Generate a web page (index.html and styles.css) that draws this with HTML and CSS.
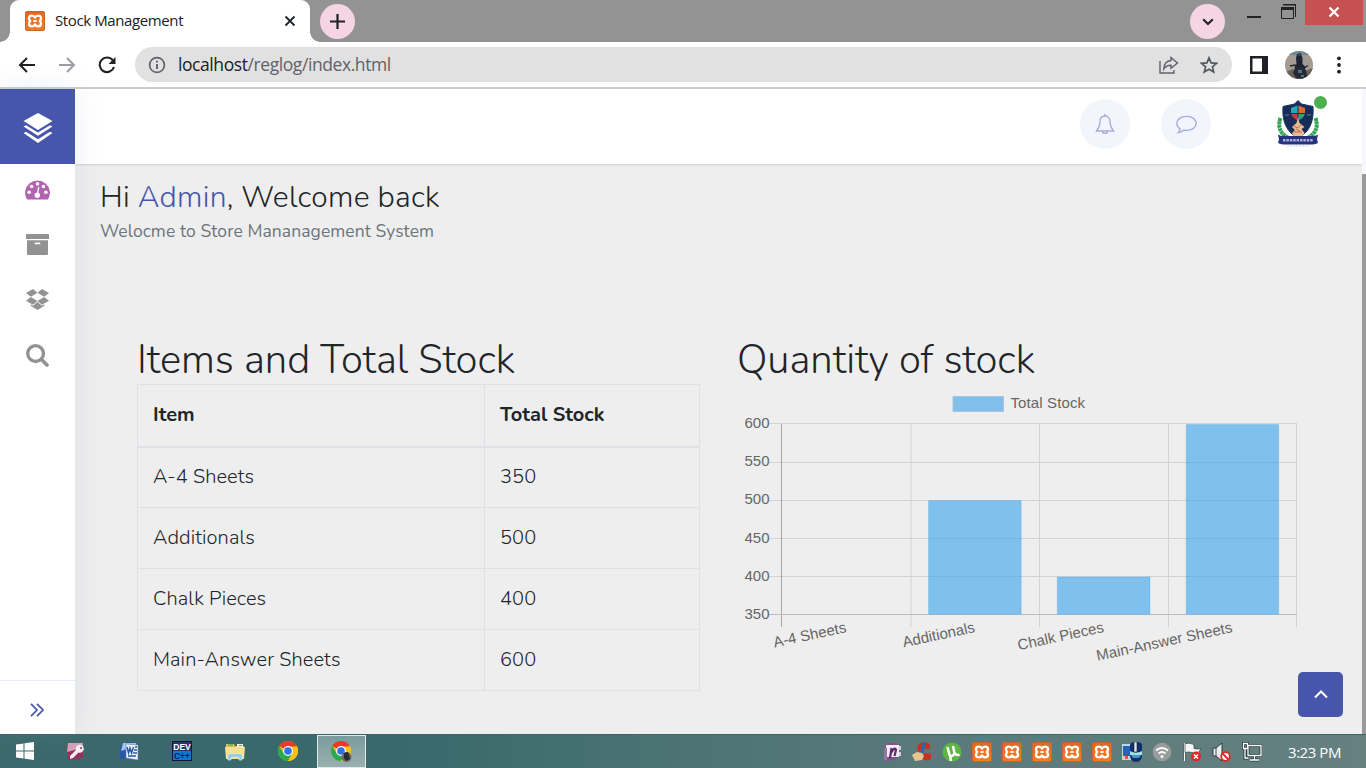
FILE: index.html
```html
<!DOCTYPE html>
<html lang="en">
<head>
<meta charset="utf-8">
<title>Stock Management</title>
<link rel="stylesheet" href="styles.css">
</head>
<body>
<svg class="defs" width="0" height="0">
  <defs>
    <linearGradient id="orange" x1="0" y1="0" x2="0" y2="1"><stop offset="0" stop-color="#d9682a"/><stop offset=".5" stop-color="#f07423"/><stop offset="1" stop-color="#f47b20"/></linearGradient>
    <symbol id="xampp" viewBox="0 0 20 20">
      <rect x=".5" y=".5" width="19" height="19" rx="1.500" fill="url(#orange)" stroke="#c9652b"/>
      <path d="M10 6.600Q9 4.700 7 4.700 4 4.700 4 7.200 4 8.500 5.200 10 4 11.500 4 12.800 4 15.300 7 15.300 9 15.300 10 13.400 11 15.300 13 15.300 16 15.300 16 12.800 16 11.500 14.800 10 16 8.500 16 7.200 16 4.700 13 4.700 11 4.700 10 6.600z" fill="none" stroke="#fff" stroke-width="2.300" stroke-linejoin="round"/>
      <path d="M8.300 10h3.400" stroke="#fff" stroke-width="1.800"/>
    </symbol>
    <symbol id="chrome" viewBox="0 0 20 20">
      <circle cx="10" cy="10" r="10" fill="#fbc116"/>
      <path d="M10 10 1.300 5A10 10 0 0 1 18.700 5z" fill="#e33b2e"/>
      <path d="M1.300 5A10 10 0 0 0 10 20l4.300-7.500L10 10 5.700 12.500z" fill="#2da94f"/>
      <path d="M10 5.500h9A10 10 0 0 1 10 20l4.300-7.500z" fill="#fbc116"/>
      <circle cx="10" cy="10" r="4.900" fill="#fff"/><circle cx="10" cy="10" r="3.800" fill="#2d72e8"/>
    </symbol>
  </defs>
</svg>
<div class="screen">
  <header class="tabstrip">
    <div class="tab">
      <svg width="20" height="20"><use href="#xampp"/></svg>
      <span class="tab-title">Stock Management</span>
      <svg class="tab-close" width="12" height="12" viewBox="0 0 12 12"><path d="M1.500 1.500l9 9M10.500 1.500l-9 9" stroke="#222529" stroke-width="1.900"/></svg>
    </div>
    <button class="round new-tab"><svg width="15" height="15" viewBox="0 0 15 15"><path d="M7.500 0v15M0 7.500h15" stroke="#202124" stroke-width="2.200"/></svg></button>
    <button class="round tab-search"><svg width="12" height="8" viewBox="0 0 12 8"><path d="M1.200 1.200 6 6l4.800-4.800" fill="none" stroke="#202124" stroke-width="2"/></svg></button>
    <div class="win-controls">
      <svg width="14" height="3"><path d="M0 1h14" stroke="#222" stroke-width="2"/></svg>
      <svg class="restore" width="16" height="16" viewBox="0 0 16 16"><path d="M2 1h12.500v12" fill="none" stroke="#222"/><path d="M2 .5h13" stroke="#222"/><path d="M.5 4v10.500h12V4" fill="none" stroke="#222"/><path d="M0 4.500h13" stroke="#222" stroke-width="3"/></svg>
      <div class="win-close"><svg width="12" height="10" viewBox="0 0 12 10"><path d="M1.500.5l9 9M10.500.5l-9 9" stroke="#fff" stroke-width="2.200"/></svg></div>
    </div>
  </header>
  <div class="toolbar">
    <svg class="nav" width="18" height="18" viewBox="0 0 18 18"><path d="M17 9H2.500M9 2 2 9l7 7" fill="none" stroke="#202124" stroke-width="2"/></svg>
    <svg class="nav" width="18" height="18" viewBox="0 0 18 18"><path d="M1 9h14.500M9 2l7 7-7 7" fill="none" stroke="#9b9da0" stroke-width="2"/></svg>
    <svg class="nav" width="18" height="18" viewBox="0 0 18 18"><path d="M14.700 4.200A7.300 7.300 0 1 0 16 11" fill="none" stroke="#202124" stroke-width="2.100"/><path d="M17.500 1v7h-7z" fill="#202124"/></svg>
    <div class="omnibox">
      <svg width="18" height="18" viewBox="0 0 18 18"><circle cx="9" cy="9" r="7.400" fill="none" stroke="#5f6368" stroke-width="1.700"/><path d="M9 8v5M9 4.700v1.900" stroke="#5f6368" stroke-width="1.900"/></svg>
      <span class="url">localhost<span class="url-path">/reglog/index.html</span></span>
      <svg class="share" width="20" height="18" viewBox="0 0 20 18"><path d="M1 5v12h14v-3" fill="none" stroke="#5f6368" stroke-width="1.400"/><path d="M12 1.500 18.500 7 12 12.200V9.200C8.500 9.200 6.500 10.300 4.800 13 5 8 7.500 4.900 12 4.500z" fill="none" stroke="#5f6368" stroke-width="1.400"/></svg>
      <svg width="18" height="18" viewBox="0 0 18 18"><path d="M9 1.900l2.100 5 5.400.4-4.100 3.500 1.300 5.300L9 13.300l-4.700 2.800 1.300-5.300L1.500 7.300l5.400-.4z" fill="none" stroke="#55595d" stroke-width="1.700"/></svg>
    </div>
    <svg class="panel-icon" width="18" height="18" viewBox="0 0 18 18"><path d="M0 0h18v18H0zM2.500 2.500v13H12v-13z" fill="#202124" fill-rule="evenodd"/></svg>
    <svg class="avatar" width="28" height="28" viewBox="0 0 28 28"><defs><clipPath id="av"><circle cx="14" cy="14" r="14"/></clipPath></defs><g clip-path="url(#av)"><path fill="#a39a90" d="M0 0h28v28H0z"/><path fill="#6c8b99" d="M0 0h28v4H0z"/><path fill="#6a6158" d="M0 21l8-3 7 4 13-5v13H0z"/><path d="M12 3h4l1.500 4v6l3 3-1 5-5 2-4-2-1-5 2-3-.5-6z" fill="#1b2436"/><circle cx="14.500" cy="3.500" r="1.800" fill="#4a403c"/><path d="M5 15l5-1 3 3h6l4-2.500" stroke="#202833" stroke-width="1.300" fill="none"/><path d="M10 17l6-1 5 3 1 6-5 3-6-1-3-5z" fill="#242b36"/><path d="M13 19h4v3h-4zM16 24h3v2h-3z" fill="#5a7184"/></g></svg>
    <svg class="dots" width="4" height="18" viewBox="0 0 4 18"><g fill="#202124"><circle cx="2" cy="2.300" r="1.900"/><circle cx="2" cy="9" r="1.900"/><circle cx="2" cy="15.700" r="1.900"/></g></svg>
  </div>

  <div class="app">
    <aside class="sidebar">
      <div class="brand"><svg width="30" height="30" viewBox="0 0 30 30" fill="#fff"><path d="M15 0 29.500 8 15 17 .5 8z"/><path d="M.5 13.500 3 12.300l12 7.200 12-7.200 2.500 1.200L15 22.800z"/><path d="M.5 20 3 18.800l12 7.400 12-7.400 2.500 1.200L15 30z"/></svg></div>
      <nav class="menu">
        <svg width="25" height="20" viewBox="0 0 25 20"><path d="M2 19.500A12.400 12.400 0 1 1 23 19.500H2z" fill="#b064b0"/><g fill="#fff"><circle cx="4.100" cy="12.300" r="1.800"/><circle cx="6.600" cy="6.500" r="1.800"/><circle cx="12.500" cy="3.900" r="1.800"/><circle cx="18.400" cy="6.500" r="1.800"/><circle cx="20.900" cy="12.300" r="1.800"/><circle cx="12.300" cy="15.300" r="2.700"/></g><path d="M12.300 15l1.400-8" stroke="#fff" stroke-width="1.400"/></svg>
        <svg width="23" height="21" viewBox="0 0 23 21" fill="#929292"><path d="M.7 0h21.600q.7 0 .7.700V5H0V.7Q0 0 .7 0z"/><path d="M1 6.200h21V20q0 1-1 1H2q-1 0-1-1zM9.500 8.500a.9.900 0 0 0 0 1.800h4a.9.900 0 0 0 0-1.800z" fill-rule="evenodd"/></svg>
        <svg width="23" height="21" viewBox="0 0 23 21" fill="#929292"><path d="M7 0l4.500 3.700L4.800 7.800 0 4zM16 0l7 4-4.800 3.800-6.700-4.100zM0 11.800l4.800-3.900 6.700 4.200L7 15.800zM18.200 7.900l4.800 3.900-7 4-4.500-3.700zM11.500 13l4.500 3.700 2.400-1.500v1.500l-6.900 4.300-6.900-4.300v-1.500L7 16.700z"/></svg>
        <svg width="23" height="23" viewBox="0 0 23 23"><circle cx="9.600" cy="9.600" r="7.900" fill="none" stroke="#929292" stroke-width="3.300"/><path d="M15.500 15.500l5.500 5.500" stroke="#929292" stroke-width="3.600" stroke-linecap="round"/></svg>
      </nav>
      <div class="expand"><svg width="14" height="14" viewBox="0 0 14 14"><path d="M1 .8 7 7l-6 6.200M7 .8 13 7l-6 6.200" fill="none" stroke="#4656ad" stroke-width="1.700"/></svg></div>
    </aside>
    <div class="page">
      <div class="topbar">
        <div class="bubble"><svg width="20" height="20" viewBox="0 0 20 20" fill="none" stroke="#a5acdc" stroke-width="1.300"><path d="M10 2C6.500 2 5 4.500 5 7.500 5 12.500 3.500 14.500 1.500 17h17c-2-2.500-3.500-4.500-3.500-9.500C15 4.500 13.500 2 10 2z"/><path d="M10 0v2M7.500 17.500c0 2.500 5 2.500 5 0" stroke-width="1.500"/></svg></div>
        <div class="bubble"><svg width="21" height="21" viewBox="0 0 20 20" fill="none" stroke="#a5acdc" stroke-width="1.300"><path d="M10 2.200c5.200 0 9.300 2.900 9.300 6.700s-4.100 6.700-9.300 6.700c-1 0-1.800-.1-2.600-.3-1.500 1.600-3.100 2.300-5.200 2.500 1.300-1.200 1.700-2.200 1.700-3.700C1.900 12.900.7 11 .7 8.900c0-3.800 4.100-6.700 9.300-6.700z"/></svg></div>
        <div class="crest">
          <svg width="42" height="48" viewBox="0 0 42 48">
            <path d="M3.500 19C0 29 4 36 14 40M38.500 19C42 29 38 36 28 40" fill="none" stroke="#35a353" stroke-width="4" stroke-dasharray="3 .4"/>
            <path d="M21 1.500l3.500 3.500L36 7.500c1 15-3 25-15 32C9 32.500 5 22 6 7.500L17.500 5z" fill="#172d58" stroke="#17345e"/>
            <path d="M14 9l6.500-2.500V14H14z" fill="#2aa6b8"/><path d="M21.500 6.500L28 9v5h-6.500z" fill="#dd6a32"/><path d="M14 15h6.500v6q-4.500-1-6.500-6z" fill="#c23a42"/><path d="M21.500 15H28q-2 5-6.500 6z" fill="#35a567"/>
            <path d="M21 18l1.500 6 5 4-3 2 3 4-2 3.500h-9L15 34l3-3-3-3 4.500-4z" fill="#e9bd91"/><path d="M17 27l3 2 4-3M16 33h9M19 30l4 2" stroke="#b56a4a" fill="none"/>
            <path d="M8 16h4M30 16h4" stroke="#62799a"/>
            <path d="M1 35.500q3 2 8 1.500h24q5 .5 8-1.500l-1 5 1 3.500q-4 2-8 1.500H9Q5 46 1 44l1-3.500z" fill="#27327f"/><path d="M6 41.300h30" stroke="#a9afd8" stroke-width="2.600" stroke-dasharray="2.500 .9" fill="none"/><path d="M10 47h22" stroke="#c8cbd8" stroke-dasharray="2 1"/>
          </svg>
          <span class="online"></span>
        </div>
      </div>
      <main class="content">
        <h1 class="greeting">Hi <span class="accent">Admin</span>, Welcome back</h1>
        <p class="subtitle">Welocme to Store Mananagement System</p>
        <div class="columns">
          <section class="stock">
            <h2 class="heading">Items and Total Stock</h2>
            <table class="stock-table">
              <thead><tr><th class="col-item">Item</th><th>Total Stock</th></tr></thead>
              <tbody>
                <tr><td>A-4 Sheets</td><td>350</td></tr>
                <tr><td>Additionals</td><td>500</td></tr>
                <tr><td>Chalk Pieces</td><td>400</td></tr>
                <tr><td>Main-Answer Sheets</td><td>600</td></tr>
              </tbody>
            </table>
          </section>
          <section class="quantity">
            <h2 class="heading">Quantity of stock</h2>
            <svg class="chart" width="562" height="282" viewBox="737 384 562 282">
              <rect x="953" y="396.500" width="50.500" height="15" fill="#82bfeb" stroke="#a4c8e0"/>
              <text x="1010.500" y="408" textLength="74.500">Total Stock</text>
              <g stroke="#d3d3d3"><path d="M769 423.500h528M769 462.500h528M769 500.500h528M769 538.500h528M769 576.500h528M911 423v204M1039.500 423v204M1168.500 423v204M1296.500 423v204"/></g>
              <path d="M781.500 424v203" stroke="#a8a8a8"/><path d="M769 614.500h528" stroke="#bcbcbc"/>
              <g fill="#36a2eb" fill-opacity=".6" stroke="#36a2eb" stroke-opacity=".25"><path d="M928.500 614.500v-114h92.700v114M1057.300 614.500V577h92.700v37.500M1186.200 614.500v-190h92.500v190"/></g>
              <g text-anchor="end"><text x="769.500" y="428">600</text><text x="769.500" y="466">550</text><text x="769.500" y="504">500</text><text x="769.500" y="543">450</text><text x="769.500" y="581">400</text><text x="769.500" y="619">350</text>
              <text transform="translate(847 632) rotate(-12)">A-4 Sheets</text><text transform="translate(975.500 632) rotate(-12)">Additionals</text><text transform="translate(1104.500 632) rotate(-12)">Chalk Pieces</text><text transform="translate(1233 632) rotate(-12)">Main-Answer Sheets</text></g>
            </svg>
          </section>
        </div>
        <button class="to-top"><svg width="14" height="9" viewBox="0 0 14 9"><path d="M1 7.500l6-6 6 6" fill="none" stroke="#fff" stroke-width="2"/></svg></button>
      </main>
    </div>
    <div class="scrollbar"><div class="thumb"></div></div>
  </div>

  <footer class="taskbar">
    <div class="task"><svg width="18" height="18" viewBox="0 0 18 18" fill="#fff"><path d="M0 2.500l7.500-1v7H0zM8.500 1.300 18 0v8.500H8.500zM0 9.500h7.500v7L0 15.500zM8.500 9.500H18V18l-9.500-1.300z"/></svg></div>
    <div class="task"><svg width="20" height="19" viewBox="0 0 20 19"><path d="M2 1h15v15l-15 2-1-13z" fill="#98305a"/><path d="M2 1h15v5L1 10z" fill="#d6a1b8"/><path d="M11.500 3.500a4 4 0 1 1 1 7L7 16l-3 1v-3l6-6c-.5-2 .1-3.700 1.500-4.500z" fill="#f6eff2"/><circle cx="15" cy="6" r="1" fill="#98305a"/></svg></div>
    <div class="task"><svg width="20" height="20" viewBox="0 0 20 20"><path d="M4 2l12-1v15L1 18V6z" fill="#2857a6"/><path d="M4 2h13v3L2 10z" fill="#a8c3e8"/><path d="M7 3l12 1v15l-12-2z" fill="#edf3fb" stroke="#5a7db8" stroke-width=".6"/><path d="M8 6l1.500 6 1.500-5 1.500 5 2-6M9 15h8M16 6h2M15 9h3M14 12h4" fill="none" stroke="#2b57a2" stroke-width="1.500"/></svg></div>
    <div class="task"><svg width="20" height="20" viewBox="0 0 20 20"><path fill="#11173b" d="M0 0h20v20H0z"/><path fill="#273766" d="M1 1h18v9H1z"/><path fill="#0879d8" d="M1 10h18v9H1z"/><text x="10" y="8.500" class="dev dev-top">DEV</text><text x="10" y="17.500" class="dev dev-bottom">C++</text></svg></div>
    <div class="task"><svg width="20" height="19" viewBox="0 0 20 19"><path d="M1 2h8l1 2h9v13H1z" fill="#e2bd60"/><path d="M3 2h5v2H3z" fill="#78b84b"/><path d="M12 2h6v3h-6z" fill="#fff2b7"/><path d="M14 3h3v1h-3z" fill="#41a4cc"/><path d="M0 5h20l-1 12H1z" fill="#f8df91"/><path d="M3 18v-5q0-1 1-1h12q1 0 1 1v5h-3v-3H6v3z" fill="#8cc9e5" stroke="#c9e7f1" stroke-width=".8"/></svg></div>
    <div class="task"><svg width="20" height="20"><use href="#chrome"/></svg></div>
    <div class="task active"><svg width="21" height="21" viewBox="0 0 21 21"><use href="#chrome" width="20" height="20"/><circle cx="15.500" cy="16" r="5" fill="#6f6760"/><path d="M13 12l4-1 2 7-4 2-2-3z" fill="#272c36"/></svg></div>
    <div class="tray">
      <svg viewBox="0 0 20 20"><path d="M5 1h11v3l-2 14-12 1V5z" fill="#83528e"/><path d="M4 3h13v12H4z" fill="#f2edf4"/><path d="M2 6h3v12H2z" fill="#9a72a3"/><path d="M8 16l1.500-10M9 11q4-7 5-3l-1.500 6" fill="none" stroke="#5f2a69" stroke-width="2.200"/><path d="M17 4h2v4h-2zM17 10h2v4h-2z" fill="#ddc9df"/></svg>
      <svg viewBox="0 0 20 20"><path d="M18 2Q10-2 6 3L5 8l3 3q1-5 10-4zM10 16q4 4 9 1v-5l-5-1-4 2z" fill="#c93023"/><path d="M11 0l3 1-3 11-3-1z" fill="#266ba7"/><path d="M0 13l5-3 5 1 2 3-2 4-7 1z" fill="#e8c493"/></svg>
      <svg viewBox="0 0 20 20"><circle cx="10" cy="10" r="9.500" fill="#60b445"/><path d="M5.500 5l2 8q1.500 2 4 0l1-1.500L11 4M8 13l1 6M12.500 11q2 3 5 1.500" fill="none" stroke="#fff" stroke-width="2.500"/></svg>
      <svg><use href="#xampp"/></svg><svg><use href="#xampp"/></svg><svg><use href="#xampp"/></svg><svg><use href="#xampp"/></svg><svg><use href="#xampp"/></svg>
      <svg viewBox="0 0 20 20"><path d="M0 2h10v16H0z" fill="#c1d7e8"/><path d="M1 4h8v10H1z" fill="#2363b9"/><path d="M8 3q0-3 6-3t6 3v10q0 7-6 7t-6-7z" fill="#102e70"/><path d="M8 9q6 3 12 0v4H8z" fill="#a4e1e4"/><path d="M9 13h10l-2 3h-6z" fill="#4597bd"/><path d="M12 0h3v10h-3z" fill="#e6e6e6" stroke="#222" stroke-width=".6"/><path d="M3 14h3v3H3z" fill="#de5939"/></svg>
      <svg viewBox="0 0 20 20"><circle cx="10" cy="10" r="9.300" fill="#999b9b"/><path d="M4 8.500q6-5 12 0M6.500 11.500q3.500-3 7 0" fill="none" stroke="#fff" stroke-width="2"/><circle cx="10" cy="14.500" r="1.500" fill="#fff"/></svg>
      <svg viewBox="0 0 20 20"><path d="M2.500 1v18" stroke="#273739" stroke-width="3"/><path d="M2.500 1v18" stroke="#fff" stroke-width="1.500"/><path d="M3 1.500q5-1 9 1v4q3 1 7 0l-2 3q1 1 0 3-4 0-7-2-3-1-7 0z" fill="#f5f5f5" stroke="#344" stroke-width=".7"/><circle cx="14" cy="14.500" r="5" fill="#dc2824"/><path d="M12 12.500l4 4m0-4l-4 4" stroke="#fff" stroke-width="1.500"/></svg>
      <svg viewBox="0 0 20 20"><path d="M1 6h3l6-5v18l-6-5H1z" fill="#eee" stroke="#293a3c"/><path d="M4 6v8" stroke="#445"/><circle cx="13.500" cy="14.500" r="4.300" fill="#fff" stroke="#df2525" stroke-width="1.800"/><path d="M10.500 11.500l6 6" stroke="#df2525" stroke-width="1.800"/></svg>
      <svg viewBox="0 0 20 20"><path d="M6 3.500h13v10H6zM12.500 14v4M8 18h9M3 7v9h3M1.500 1.500h4v5h-4z" fill="none" stroke="#26383a" stroke-width="3"/><path d="M6 3.500h13v10H6zM12.500 14v4M8 18h9M3 7v9h3M1.500 1.500h4v5h-4z" fill="none" stroke="#fff" stroke-width="1.300"/></svg>
    </div>
    <span class="clock">3:23 PM</span>
  </footer>
</div>
</body>
</html>
```
FILE: styles.css
```css
* { box-sizing: border-box; }
body { margin: 0; overflow: hidden; font-family: "Nunito", "Open Sans", sans-serif; color: #212529; }
svg { display: block; flex-shrink: 0; }
button { border: 0; padding: 0; }
.defs { position: absolute; }
.screen { width: 1366px; height: 768px; display: flex; flex-direction: column; }

.tabstrip { height: 42px; flex-shrink: 0; background: #939393; display: flex; padding-left: 10px; }
.tab { width: 300px; height: 42px; background: #fff; border-radius: 9px 9px 0 0; display: flex; align-items: center; padding: 0 14px 0 15px; position: relative; }
.tab::before, .tab::after { content: ""; position: absolute; bottom: 0; width: 10px; height: 10px; }
.tab::before { left: -10px; background: radial-gradient(circle at 0 0, transparent 9.500px, #fff 10px); }
.tab::after { right: -10px; background: radial-gradient(circle at 100% 0, transparent 9.500px, #fff 10px); }
.tab-title { font: 15px/20px "Open Sans", sans-serif; margin: -2px 0 0 10px; flex: 1; color: #202124; letter-spacing: -.39px; }
.round { width: 35px; height: 35px; border-radius: 50%; background: #f5d5e4; display: flex; align-items: center; justify-content: center; margin-top: 4px; }
.new-tab { margin-left: 10px; }
.tab-search { margin-left: auto; }
.win-controls { display: flex; margin-left: 22px; width: 119px; align-items: flex-start; }
.win-controls > svg:first-child { margin-top: 16px; }
.restore { margin-left: 20px; margin-top: 4px; }
.win-close { margin-left: 8px; width: 58px; height: 25px; background: #c75050; display: flex; align-items: center; justify-content: center; padding: 0 1px 2px 0; }

.toolbar { height: 47px; flex-shrink: 0; background: #fff; border-bottom: 2px solid #ccc; display: flex; align-items: center; padding-left: 18px; }
.nav { margin-right: 22px; }
.omnibox { width: 1097px; height: 35px; margin-left: -3px; background: #e1e1e1; border-radius: 18px; display: flex; align-items: center; padding: 0 14px 0 13px; }
.url { font: 17.500px/24px "Open Sans", sans-serif; color: #202124; margin: -1px 0 0 12px; flex: 1; letter-spacing: -.42px; }
.url-path { color: #606367; }
.share { margin-right: 21px; }
.panel-icon { margin-left: 18px; }
.avatar { margin-left: 17px; }
.dots { margin-left: 24px; }

.app { height: 645px; flex-shrink: 0; display: flex; background: #eee; }
.sidebar { width: 75px; background: #fff; display: flex; flex-direction: column; box-shadow: 0 0 28px rgba(130, 150, 180, .16); position: relative; }
.brand { height: 75px; background: #4755ab; display: flex; align-items: center; justify-content: center; padding-top: 3px; }
.menu { flex: 1; display: flex; flex-direction: column; align-items: center; padding-top: 16px; gap: 34px; }
.expand { height: 54px; border-top: 1px solid #e4ebf6; display: flex; align-items: center; justify-content: center; padding: 5px 2px 0 0; }
.page { width: 1287px; display: flex; flex-direction: column; }
.topbar { height: 75px; flex-shrink: 0; background: #fff; box-shadow: 0 1px 2px rgba(0, 0, 0, .12); display: flex; align-items: flex-start; justify-content: flex-end; gap: 31px; padding: 10px 43px 0 0; }
.bubble { width: 50px; height: 50px; border-radius: 50%; background: #f2f6fc; display: flex; align-items: center; justify-content: center; }
.crest { position: relative; margin-left: 35px; }
.online { position: absolute; width: 13px; height: 13px; border-radius: 50%; background: #4caf50; right: -8px; top: -3px; }
.content { flex: 1; padding-left: 25px; position: relative; }
.greeting { margin: 14px 0 0; font-size: 30px; line-height: 40px; font-weight: 360; white-space: nowrap; letter-spacing: .27px; }
.accent { color: #4656ad; }
.subtitle { margin: 1px 0 0; font-size: 17.500px; line-height: 25px; font-weight: 370; color: #6c757d; white-space: nowrap; letter-spacing: .08px; }
.columns { display: flex; gap: 37px; padding: 91px 0 0 37px; }
.stock { width: 563px; }
.heading { margin: 0; padding-top: 1px; height: 49px; font-size: 40px; line-height: 49px; font-weight: 360; white-space: nowrap; letter-spacing: -.03px; }
.stock-table { width: 563px; border-collapse: collapse; table-layout: fixed; font-size: 20px; line-height: 28px; font-weight: 365; letter-spacing: .1px; }
.stock-table th, .stock-table td { height: 61px; padding: 0 15px; border: 1px solid #dee2e6; text-align: left; }
.stock-table th { height: 62px; padding-bottom: 1px; border-bottom-width: 2px; font-weight: 700; letter-spacing: 0; }
.col-item { width: 347px; }
.chart { font-family: "Liberation Sans", Arial, sans-serif; font-size: 15px; fill: #666; }
.to-top { position: absolute; right: 19px; bottom: 17px; width: 45px; height: 45px; border-radius: 5px; background: #4755ab; display: flex; align-items: center; justify-content: center; }
.scrollbar { width: 4px; background: #f7f7ff; padding-top: 85px; position: relative; }
.thumb { height: 560px; background: #999b9a; }

.taskbar { height: 34px; flex-shrink: 0; background: linear-gradient(90deg, #3c696b 0, #38696b 400px, #4d7475 700px, #5b7a7b 950px, #668080 100%); border-top: 1px solid #376768; display: flex; align-items: center; }
.task { width: 53px; height: 33px; display: flex; align-items: center; justify-content: center; padding-bottom: 1px; }
.task:first-child { width: 49px; }
.active { width: 49px; margin-left: 3px; background: linear-gradient(#7b9b9d, #9aafaf); border: 1px solid #dfebeb; }
.dev { font: bold 8.500px "Liberation Sans", sans-serif; text-anchor: middle; }
.dev-top { fill: #fff; }
.dev-bottom { fill: #08214d; }
.tray { display: flex; gap: 10px; margin-left: auto; }
.tray svg { width: 20px; height: 20px; }
.clock { font: 15px/20px "Open Sans", sans-serif; color: #fff; width: 104px; padding-left: 26px; white-space: nowrap; letter-spacing: -.45px; }
```
